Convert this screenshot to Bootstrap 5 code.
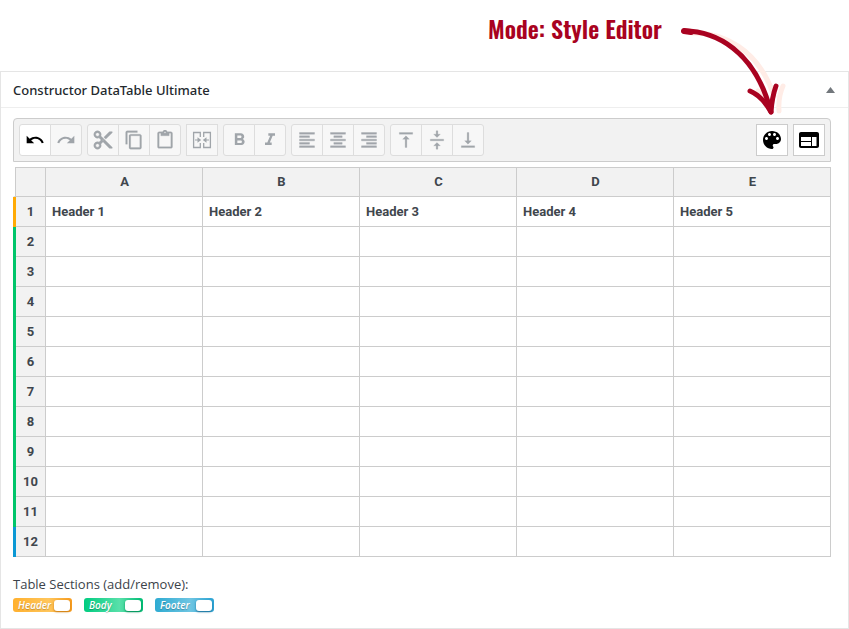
<!DOCTYPE html>
<html lang="en">
<head>
<meta charset="utf-8">
<meta name="viewport" content="width=device-width, initial-scale=1">
<title>Constructor DataTable Ultimate</title>
<link href="https://cdn.jsdelivr.net/npm/bootstrap@5.3.0/dist/css/bootstrap.min.css" rel="stylesheet">
<style>
  body { font-family: "Noto Sans", "Open Sans", sans-serif; font-size: 13px; color: #3c434a; background: #fff; }
  .callout { height: 71px; padding: 10px 187px 0 0; color: #a90220; font: 600 24px/36px Oswald, Roboto, sans-serif; }
  .callout-arrow { top: 20px; right: 57px; width: 120px; height: 100px; z-index: 2; pointer-events: none; }
  .panel { border: 1px solid #e5e5e5; }
  .panel-head { height: 36px; padding: 0 12px; border-bottom: 1px solid #eee; }
  .panel-title { font-size: 13px; line-height: 20px; font-weight: 500; color: #23282d; }
  .panel-toggle { width: 11px; height: 10px; color: #72777c; }
  .panel-content { padding: 10px 17px 16px 12px; }
  .tools { gap: 5px; padding: 5px; background: #f2f2f2; border: 1px solid #ccc; border-radius: 4px 4px 0 0; }
  .tool { width: 32px; height: 32px; padding: 0; display: flex; align-items: center; justify-content: center; border: 1px solid #ddd; border-radius: 3px; background: #fff; color: #000; }
  .tool:disabled { background: #f7f7f7; border-color: #ddd; color: #a0a5aa; opacity: 1; }
  .tool-square { border-radius: 0; }
  .tool-mode { border-color: #ccc; border-radius: 0; }
  .tool svg { width: 20px; height: 20px; fill: currentColor; }
  .tool .icon-lg { width: 22px; height: 22px; }
  .sheet { margin: 5px 0 0; width: 100%; table-layout: fixed; border-collapse: separate; border-spacing: 0; font: 700 13px/20px Roboto, sans-serif; color: #40464d; }
  .sheet th, .sheet td { height: 30px; padding: 0 6px; border: 0 solid #ccc; border-width: 0 1px 1px 0; vertical-align: middle; }
  .sheet th { background: #f2f2f2; text-align: center; padding: 0; }
  .sheet thead th { border-top-width: 1px; padding-left: 1px; }
  .sheet .corner { width: 33px; border-left: 2px solid transparent; border-top: 0; background-clip: padding-box; box-shadow: inset 1px 1px #ccc; }
  .sheet tbody th { position: relative; padding-left: 3px; }
  .sheet tbody th::before { content: ""; position: absolute; top: 0; bottom: -1px; left: 0; width: 3px; background: #00c56a; }
  .sheet .row-header th::before { background: #ffaa05; }
  .sheet .row-footer th::before { background: #0b98d4; }
  .sections-title { margin: 18px 0 4px; font: 400 13px/19px "Open Sans", "Noto Sans", sans-serif; }
  .switches { gap: 12px; }
  .switch { width: 59px; height: 14px; padding: 0 2px 0 5px; border-radius: 3px; color: #fff; font: italic 600 10px/14px "Open Sans", sans-serif; cursor: pointer; text-shadow: 0 1px 1px rgba(0,0,0,.25); }
  .switch input { appearance: none; flex: none; width: 16px; height: 11px; margin: 0; border-radius: 3px; background: #fff; }
  .switch-header { background: linear-gradient(90deg, #ffb02e, #ffc65c 60%, #f79c1f); }
  .switch-header input { box-shadow: 0 1px 2px #c97a10; }
  .switch-body { background: linear-gradient(90deg, #00cc80, #58e0aa 60%, #00bd75); }
  .switch-body input { box-shadow: 0 1px 2px #008a54; }
  .switch-footer { background: linear-gradient(90deg, #2eabd2, #6ec5e2 60%, #2ba3d4); }
  .switch-footer input { box-shadow: 0 1px 2px #1c6f98; }
</style>
<script src="https://cdn.jsdelivr.net/npm/bootstrap@5.3.0/dist/js/bootstrap.bundle.min.js"></script>
</head>
<body>
<div class="position-relative">
  <div class="callout text-end">Mode: Style Editor</div>
  <svg class="callout-arrow position-absolute" viewBox="0 0 120 100" fill="none" stroke-linecap="round" stroke-linejoin="round" aria-hidden="true">
    <g stroke="#ffece6" stroke-width="5">
      <path d="M20 13C50 12 86 28 102 76"/><path d="M86 71L92 76M107 91Q106 77 111 66"/>
    </g>
    <g stroke="#a90220" fill="#a90220">
      <path d="M12 11C43 11 83 30 99 92" fill="none" stroke-width="5"/>
      <path d="M12 11L19 12" stroke-width="6"/>
      <path d="M78 71Q90 76 99 92Q100 77 104 66" fill="none" stroke-width="5"/>
      <path d="M90 79L98 84L99 93Z" stroke-width="2"/>
    </g>
  </svg>
</div>

<main class="panel">
  <header class="panel-head d-flex align-items-center justify-content-between">
    <h1 class="panel-title m-0">Constructor DataTable Ultimate</h1>
    <button type="button" class="btn p-0 border-0 d-flex panel-toggle" aria-label="Toggle panel">
      <svg viewBox="0 0 11 10" width="11" height="10" fill="currentColor"><path d="M5.500 2L10 8H1Z"/></svg>
    </button>
  </header>

  <div class="panel-content">
    <div class="tools d-flex" role="toolbar" aria-label="Table tools">
      <div class="btn-group">
        <button class="btn tool" type="button" aria-label="Undo"><svg viewBox="0 0 24 24"><path d="M12.500 8c-2.650 0-5.050.990-6.900 2.600L2 7v9h9l-3.620-3.620c1.390-1.160 3.160-1.880 5.120-1.880 3.540 0 6.550 2.310 7.600 5.500l2.370-.780C21.080 11.030 17.150 8 12.500 8z"/></svg></button>
        <button class="btn tool" type="button" aria-label="Redo" disabled><svg viewBox="0 0 24 24"><path d="M18.400 10.600C16.550 8.990 14.150 8 11.500 8c-4.650 0-8.580 3.030-9.960 7.220L3.900 16c1.050-3.190 4.050-5.500 7.600-5.500 1.950 0 3.730.720 5.120 1.880L13 16h9V7l-3.600 3.600z"/></svg></button>
      </div>
      <div class="btn-group">
        <button class="btn tool" type="button" aria-label="Cut" disabled><svg class="icon-lg" viewBox="0 0 24 24"><path stroke="currentColor" stroke-width=".5" d="M9.640 7.640c.230-.500.360-1.050.360-1.640 0-2.210-1.790-4-4-4S2 3.790 2 6s1.790 4 4 4c.590 0 1.140-.130 1.640-.360L10 12l-2.360 2.360C7.140 14.130 6.590 14 6 14c-2.210 0-4 1.790-4 4s1.790 4 4 4 4-1.790 4-4c0-.590-.130-1.140-.360-1.640L12 14l7 7h3v-1L9.640 7.640zM6 8c-1.100 0-2-.890-2-2s.900-2 2-2 2 .890 2 2-.900 2-2 2zm0 12c-1.100 0-2-.890-2-2s.900-2 2-2 2 .890 2 2-.900 2-2 2zm6-7.500c-.280 0-.500-.220-.500-.500s.220-.500.500-.500.500.220.500.500-.220.500-.500.500zM19 3l-6 6 2 2 7-7V3z"/></svg></button>
        <button class="btn tool" type="button" aria-label="Copy" disabled><svg viewBox="0 0 24 24"><path stroke="currentColor" stroke-width=".3" d="M16 1H4c-1.100 0-2 .900-2 2v14h2V3h12V1zm3 4H8c-1.100 0-2 .900-2 2v14c0 1.100.900 2 2 2h11c1.100 0 2-.900 2-2V7c0-1.100-.900-2-2-2zm0 16H8V7h11v14z"/></svg></button>
        <button class="btn tool" type="button" aria-label="Paste" disabled><svg viewBox="0 0 24 24"><path stroke="currentColor" stroke-width=".3" d="M19 2h-4.180C14.400.840 13.300 0 12 0S9.600.840 9.180 2H5c-1.100 0-2 .900-2 2v16c0 1.100.900 2 2 2h14c1.100 0 2-.900 2-2V4c0-1.100-.900-2-2-2zm-7 0c.550 0 1 .450 1 1s-.450 1-1 1-1-.450-1-1 .450-1 1-1zm7 18H5V4h2v3h10V4h2v16z"/></svg></button>
      </div>
      <button class="btn tool tool-square" type="button" aria-label="Merge cells" disabled><svg viewBox="0 0 20 20"><path fill="none" stroke="currentColor" stroke-width="1.300" d="M8.300 7V2.500H1.600v15h6.700V13M11.700 7V2.500h6.700v15h-6.700V13"/><path d="M3 9.400h2.500V7.200L9.200 10l-3.700 2.800v-2.200H3zM17 9.400h-2.500V7.200L10.800 10l3.700 2.800v-2.200H17z"/></svg></button>
      <div class="btn-group">
        <button class="btn tool" type="button" aria-label="Bold" disabled><svg viewBox="0 0 24 24"><path d="M16.600 10.790c.970-.670 1.650-1.770 1.650-2.790 0-2.260-1.750-4-4-4H7v14h8.040c2.090 0 3.710-1.700 3.710-3.790 0-1.520-.860-2.820-2.150-3.420zM10 6.500h3.500c.830 0 1.500.670 1.500 1.500s-.670 1.500-1.500 1.500H10v-3zm4 9h-4v-3h4c.830 0 1.500.670 1.500 1.500s-.670 1.500-1.500 1.500z"/></svg></button>
        <button class="btn tool" type="button" aria-label="Italic" disabled><svg viewBox="0 0 24 24"><path d="M10 4v3h2.210l-3.420 8H6v3h8v-3h-2.210l3.420-8H18V4z"/></svg></button>
      </div>
      <div class="btn-group">
        <button class="btn tool" type="button" aria-label="Align left" disabled><svg viewBox="0 0 24 24"><path stroke="currentColor" stroke-width=".4" d="M15 15H3v2h12v-2zm0-8H3v2h12V7zM3 13h18v-2H3v2zm0 8h18v-2H3v2zM3 3v2h18V3H3z"/></svg></button>
        <button class="btn tool" type="button" aria-label="Align center" disabled><svg viewBox="0 0 24 24"><path stroke="currentColor" stroke-width=".4" d="M7 15v2h10v-2H7zm-4 6h18v-2H3v2zm0-8h18v-2H3v2zm4-6v2h10V7H7zM3 3v2h18V3H3z"/></svg></button>
        <button class="btn tool" type="button" aria-label="Align right" disabled><svg viewBox="0 0 24 24"><path stroke="currentColor" stroke-width=".4" d="M3 21h18v-2H3v2zm6-4h12v-2H9v2zm-6-4h18v-2H3v2zm6-4h12V7H9v2zM3 3v2h18V3H3z"/></svg></button>
      </div>
      <div class="btn-group">
        <button class="btn tool" type="button" aria-label="Align top" disabled><svg viewBox="0 0 24 24"><path stroke="currentColor" stroke-width=".3" d="M8 11h3v10h2V11h3l-4-4-4 4zM4 3v2h16V3H4z"/></svg></button>
        <button class="btn tool" type="button" aria-label="Align middle" disabled><svg viewBox="0 0 24 24"><path stroke="currentColor" stroke-width=".3" d="M8 19h3v4h2v-4h3l-4-4-4 4zm8-14h-3V1h-2v4H8l4 4 4-4zM4 11v2h16v-2H4z"/></svg></button>
        <button class="btn tool" type="button" aria-label="Align bottom" disabled><svg viewBox="0 0 24 24"><path stroke="currentColor" stroke-width=".3" d="M16 13h-3V3h-2v10H8l4 4 4-4zM4 19v2h16v-2H4z"/></svg></button>
      </div>
      <button class="btn tool tool-mode ms-auto" type="button" aria-label="Style editor"><svg class="icon-lg" viewBox="1 1 22 22"><path d="M12 3c-4.970 0-9 4.030-9 9s4.030 9 9 9c.830 0 1.500-.670 1.500-1.500 0-.390-.150-.740-.390-1.010-.230-.260-.380-.610-.380-.990 0-.830.670-1.500 1.500-1.500H16c2.760 0 5-2.240 5-5 0-4.420-4.030-8-9-8zm-5.500 9c-.830 0-1.500-.670-1.500-1.500S5.670 9 6.500 9 8 9.670 8 10.500 7.330 12 6.500 12zm3-4C8.670 8 8 7.330 8 6.500S8.670 5 9.500 5s1.500.670 1.500 1.500S10.330 8 9.500 8zm5 0c-.830 0-1.500-.670-1.500-1.500S13.670 5 14.500 5s1.500.670 1.500 1.500S15.330 8 14.500 8zm3 4c-.830 0-1.500-.670-1.500-1.500S16.670 9 17.500 9s1.500.670 1.500 1.500-.670 1.500-1.500 1.500z"/></svg></button>
      <button class="btn tool tool-mode" type="button" aria-label="Layout"><svg class="icon-lg" viewBox="1 1 22 22"><path d="M20 4H4c-1.100 0-1.990.900-1.990 2L2 18c0 1.100.900 2 2 2h16c1.100 0 2-.900 2-2V6c0-1.100-.900-2-2-2zm-6 14H4v-4h10v4zm0-5H4V9h10v4zm5.500 5H15V9h4.500v9z"/></svg></button>
    </div>

    <table class="sheet">
      <thead>
        <tr><th class="corner" aria-label="Row"></th><th scope="col">A</th><th scope="col">B</th><th scope="col">C</th><th scope="col">D</th><th scope="col">E</th></tr>
      </thead>
      <tbody>
        <tr class="row-header"><th scope="row">1</th><td>Header 1</td><td>Header 2</td><td>Header 3</td><td>Header 4</td><td>Header 5</td></tr>
        <tr><th scope="row">2</th><td></td><td></td><td></td><td></td><td></td></tr>
        <tr><th scope="row">3</th><td></td><td></td><td></td><td></td><td></td></tr>
        <tr><th scope="row">4</th><td></td><td></td><td></td><td></td><td></td></tr>
        <tr><th scope="row">5</th><td></td><td></td><td></td><td></td><td></td></tr>
        <tr><th scope="row">6</th><td></td><td></td><td></td><td></td><td></td></tr>
        <tr><th scope="row">7</th><td></td><td></td><td></td><td></td><td></td></tr>
        <tr><th scope="row">8</th><td></td><td></td><td></td><td></td><td></td></tr>
        <tr><th scope="row">9</th><td></td><td></td><td></td><td></td><td></td></tr>
        <tr><th scope="row">10</th><td></td><td></td><td></td><td></td><td></td></tr>
        <tr><th scope="row">11</th><td></td><td></td><td></td><td></td><td></td></tr>
        <tr class="row-footer"><th scope="row">12</th><td></td><td></td><td></td><td></td><td></td></tr>
      </tbody>
    </table>

    <p class="sections-title">Table Sections (add/remove):</p>
    <div class="switches d-flex">
      <label class="switch switch-header d-flex align-items-center justify-content-between">Header <input type="checkbox" checked></label>
      <label class="switch switch-body d-flex align-items-center justify-content-between">Body <input type="checkbox" checked></label>
      <label class="switch switch-footer d-flex align-items-center justify-content-between">Footer <input type="checkbox" checked></label>
    </div>
  </div>
</main>
</body>
</html>
